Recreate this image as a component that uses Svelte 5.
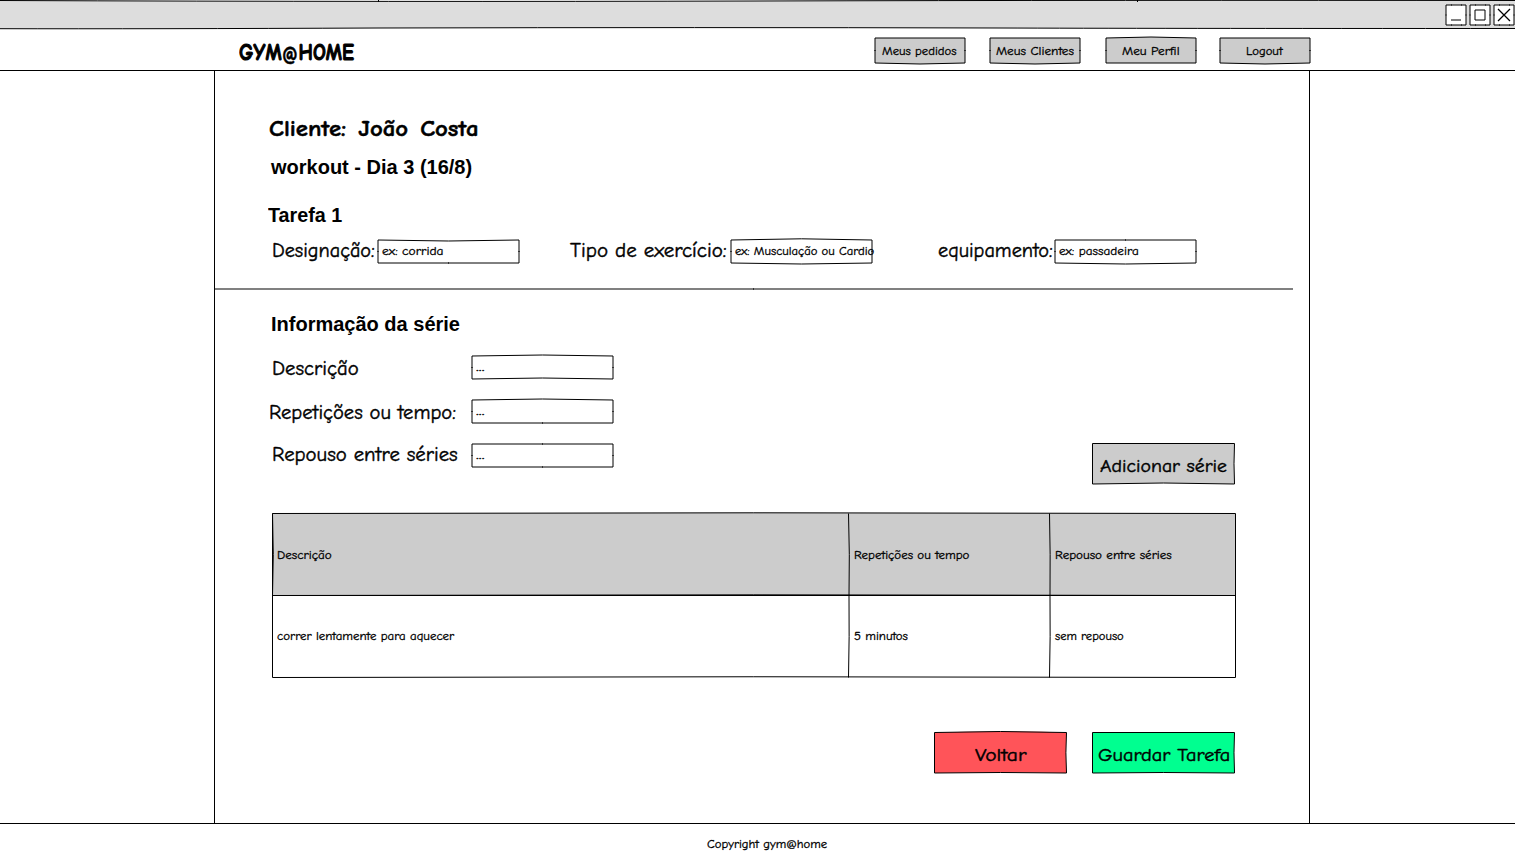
<script>
  const nav = [
    { text: 'Meus pedidos', w: 75, bow: [0, 0, 1, 0], gap: 0 },
    { text: 'Meus Clientes', w: 78, bow: [0, 0, 1, 0], gap: 25 },
    { text: 'Meu Perfil', w: 58, bow: [-1, 0, 0, 0], gap: 26 },
    { text: 'Logout', w: 37, bow: [0, 0, 1, 0], gap: 24 }
  ];

  const fields = [
    { label: 'Designação:', w: 103, hint: 'ex: corrida', hw: 62, bow: [1, 0, 0, 0], cls: 'f1' },
    { label: 'Tipo de exercício:', w: 157, hint: 'ex: Musculação ou Cardio', hw: 139, bow: [-1.2, 0, 1, 0], cls: 'f2' },
    { label: 'equipamento:', w: 115, hint: 'ex: passadeira', hw: 80, bow: [0, 0, 1, 0], cls: 'f3' }
  ];

  const series = [
    { label: 'Descrição', w: 87, bow: [-1, 0, -1, 0], x: 3 },
    { label: 'Repetições ou tempo:', w: 187, bow: [-1, 0, 0, 0], x: 0 },
    { label: 'Repouso entre séries', w: 186, bow: [0, 0, 0, 0], x: 3 }
  ];

  const cells = [
    { text: 'Descrição', w: 55 },
    { text: 'Repetições ou tempo', w: 115 },
    { text: 'Repouso entre séries', w: 117 },
    { text: 'correr lentamente para aquecer', w: 177 },
    { text: '5 minutos', w: 54 },
    { text: 'sem repouso', w: 69 }
  ];

  // Stretches a label horizontally so that it fills its given width.
  function fit(node, width) {
    node.style.transform = `scaleX(${width / node.offsetWidth})`;
  }

  // Rectangle whose edges bow slightly, in the order top, right, bottom, left.
  function outline(w, h, [t, r, b, l]) {
    return `M0 0Q${w / 2} ${t * 2} ${w} 0Q${w + r * 2} ${h / 2} ${w} ${h}Q${w / 2} ${h + b * 2} 0 ${h}Q${l * 2} ${h / 2} 0 0Z`;
  }
</script>

{#snippet txt(text, w)}
  <span class="txt" style="width:{w}px"><span use:fit={w}>{text}</span></span>
{/snippet}

{#snippet frame(w, h, bow, fill, ticks)}
  <svg class="frame" width={w} height={h} aria-hidden="true">
    <path transform={ticks ? null : 'translate(.5 .5)'} d={outline(w, h, bow)} {fill} stroke="#000" stroke-linejoin="round" />
    {#if ticks}
      <path d="M-1 {h / 2}h2M{w - 1} {h / 2}h2" stroke="#000" stroke-opacity=".6" />
      {#if bow[0] === 0 && h < 25}<path d="M{w / 2} -1v2" stroke="#000" stroke-opacity=".6" />{/if}
      {#if bow[2] === 0 && h < 25}<path d="M{w / 2} {h - 1}v2" stroke="#000" stroke-opacity=".6" />{/if}
    {/if}
  </svg>
{/snippet}

<div class="window">
  <div class="titlebar">
    <svg class="edges" width="1515" height="30" aria-hidden="true">
      <path d="M-2 .5Q400 2 757 1T1517 .5V28.5Q1136 28.5 1000 28Q700 27.2 378 28Q150 29 -2 28.7Z" fill="#ddd" stroke="#000" />
      <path d="M378.5 0v2M1137.5 0v2" stroke="#000" />
    </svg>
    <div class="controls">
      <svg viewBox="0 0 20 20"><path d="M0 0H20V20H0Z" fill="#fff" /><path d="M5 15H15" /><path class="nick" d="M5.5-1v2M15.5-1v2M5.5 19v2M15.5 19v2M-1 10h2M19 10h2" /></svg>
      <svg viewBox="0 0 20 20"><path d="M0 0H20V20H0Z" fill="#fff" /><path d="M5 5H15V15H5Z" /><path class="nick" d="M5.5-1v2M15.5-1v2M5.5 19v2M15.5 19v2M-1 10h2M19 10h2" /></svg>
      <svg viewBox="0 0 20 20"><path d="M0 0H20V20H0Z" fill="#fff" /><path d="M4 4L16 16M16 4L4 16" stroke-width="1.3" /><path class="nick" d="M5.5-1v2M15.5-1v2M5.5 19v2M15.5 19v2M-1 10h2M19 10h2" /></svg>
    </div>
  </div>

  <header>
    <div class="logo"><span use:fit={115}>GYM<small>@</small>HOME</span></div>
    <nav>
      {#each nav as n}
        <div class="navbtn" style="margin-left:{n.gap}px">
          {@render frame(90, 25, n.bow, '#ccc', true)}
          {@render txt(n.text, n.w)}
        </div>
      {/each}
    </nav>
  </header>

  <main>
    <h1>{@render txt('Cliente: João Costa', 210)}</h1>
    <h2 class="workout">{@render txt('workout - Dia 3 (16/8)', 201)}</h2>
    <h2 class="task">{@render txt('Tarefa 1', 74)}</h2>

    <div class="fields">
      {#each fields as f}
        <div class="field {f.cls}">
          <span class="label">{@render txt(f.label, f.w)}</span>
          <div class="input">
            {@render frame(141, 23, f.bow, '#fff', true)}
            {@render txt(f.hint, f.hw)}
          </div>
        </div>
      {/each}
    </div>

    <div class="divider"><i></i></div>

    <h2 class="info">{@render txt('Informação da série', 189)}</h2>

    <div class="block">
      <div class="series">
        {#each series as s}
          <div class="row">
            <span class="label" style="padding-left:{s.x}px">{@render txt(s.label, s.w)}</span>
            <div class="input">
              {@render frame(141, 23, s.bow, '#fff', true)}
              {@render txt('...', 9)}
            </div>
          </div>
        {/each}
      </div>
      <div class="btn">
        {@render frame(142, 40.5, [0, -0.5, -1, 0], '#ccc', false)}
        {@render txt('Adicionar série', 127)}
      </div>
    </div>

    <div class="table">
      <svg class="frame" width="963" height="164" aria-hidden="true">
        <g transform="translate(.5 .5)">
          <path d="M0 0Q480-1.4 963 0V82Q480 80.6 0 82Q1.6 41 0 0Z" fill="#ccc" />
          <g fill="none" stroke="#000">
            <path d="M0 0Q480-1.4 963 0V164Q480 162.5 0 164Z" />
            <path d="M0 0Q1.6 41 0 82H963Q480 80.6 0 82" />
            <path d="M576 0Q577.4 41 576.5 82Q577 123 576 164M777 0Q778 41 777.5 82Q778 123 777 164" />
          </g>
        </g>
      </svg>
      {#each cells as c}
        <div class="cell">{@render txt(c.text, c.w)}</div>
      {/each}
    </div>

    <div class="actions">
      <div class="btn back">
        {@render frame(132, 40.5, [-1, -0.6, -0.5, 0], '#ff5459', false)}
        {@render txt('Voltar', 52)}
      </div>
      <div class="btn">
        {@render frame(142, 40.5, [0, -0.5, -0.5, 0], '#00ff90', false)}
        {@render txt('Guardar Tarefa', 132)}
      </div>
    </div>
  </main>

  <footer>{@render txt('Copyright gym@home', 120)}</footer>
</div>

<style>
  :global(body) { background: #fff; overflow: hidden; }
  .window {
    width: 1515px;
    height: 863px;
    display: flex;
    flex-direction: column;
    color: #000;
    font: 400 12.4px/20px "Comic Sans MS", "Comic Neue", "Open Sans", sans-serif;
    -webkit-text-stroke: .3px #000;
  }
  .txt { display: inline-block; white-space: nowrap; flex: none; }
  .txt span { display: inline-block; transform-origin: 0 50%; }
  .frame { position: absolute; left: 0; top: 0; overflow: visible; z-index: 0; }
  .frame ~ * { position: relative; z-index: 1; }

  .titlebar { position: relative; height: 29px; flex: none; }
  .edges { position: absolute; left: 0; top: 0; }
  .controls { position: relative; display: flex; justify-content: flex-end; gap: 4px; padding: 5px 1px 0 0; }
  .controls svg { width: 20px; height: 20px; overflow: visible; fill: none; stroke: #000; stroke-linejoin: round; }
  .nick { stroke-opacity: .5; }

  header {
    height: 41px;
    flex: none;
    border-bottom: 1px solid #000;
    display: flex;
    justify-content: space-between;
    padding: 0 205px 0 239px;
  }
  .logo {
    width: 115px;
    font-size: 25px;
    font-weight: 700;
    line-height: 45px;
    letter-spacing: .3px;
    white-space: nowrap;
    -webkit-text-stroke: 1.2px #000;
  }
  .logo span { display: inline-block; transform-origin: 0 50%; }
  .logo small { font-size: 24px; line-height: 1; position: relative; top: 2px; -webkit-text-stroke-width: .4px; }
  nav { display: flex; padding-top: 9px; }
  .navbtn { position: relative; width: 90px; height: 25px; line-height: 27px; text-align: center; }
  .navbtn .txt, .btn .txt { text-align: left; }
  .navbtn .txt { left: -.5px; }

  main {
    width: 1094px;
    height: 752px;
    flex: none;
    margin-left: 214px;
    border: solid #000;
    border-width: 0 1px;
  }
  h1, h2 { margin: 0; display: flex; }
  h1 { font-size: 23px; line-height: 30px; font-weight: 700; word-spacing: 3px; padding: 43px 0 0 54px; -webkit-text-stroke: .5px #000; }
  h2 { font: 700 20px/24px "Liberation Sans", Arial, sans-serif; -webkit-text-stroke: 0; }
  .workout { padding: 11px 0 0 56px; }
  .task { padding: 24px 0 0 53px; }
  .label { font-size: 21px; line-height: 24px; -webkit-text-stroke-width: .45px; }

  .fields { display: flex; height: 24px; padding: 11px 0 0 57px; }
  .field { display: flex; }
  .f1 .input { margin-left: 3px; }
  .f2 { margin-left: 51px; }
  .f2 .input { margin-left: 4px; }
  .f3 { margin-left: 66px; }
  .f3 .input { margin-left: 2px; }
  .input { position: relative; width: 141px; height: 23px; margin-top: 2px; padding-left: 4px; box-sizing: border-box; line-height: 23px; }

  .divider { width: 1078px; height: 2px; margin-top: 26px; background: #808080; display: flex; justify-content: center; }
  .divider i { width: 1px; height: 2px; margin-right: 2px; background: #333; }
  .info { padding: 22px 0 0 56px; }

  .block { display: flex; justify-content: space-between; padding: 20px 75px 0 54px; }
  .series { display: flex; flex-direction: column; gap: 21px; }
  .row { display: flex; height: 23px; }
  .row .label { width: 203px; box-sizing: border-box; line-height: 24px; }
  .row:nth-child(3) .label { margin-top: -2px; }
  .row .input { margin-top: 0; }
  .btn { position: relative; width: 142px; height: 41px; font-size: 19px; line-height: 46px; text-align: center; -webkit-text-stroke-width: .45px; }
  .btn .txt { left: .7px; }
  .block .btn { margin: 87px 0 0; }

  .table {
    position: relative;
    width: 963px;
    margin: 29px 0 0 57px;
    display: grid;
    grid-template-columns: 577px 201px 185px;
    grid-template-rows: 82px 82px;
    line-height: 84px;
  }
  .cell { padding-left: 5px; }
  .cell:nth-child(n + 5) { line-height: 82px; }
  .actions { display: flex; justify-content: flex-end; gap: 26px; padding: 55px 75px 0 0; }
  .back { width: 132px; }

  footer { border-top: 1px solid #000; height: 39px; line-height: 41px; padding-left: 707px; }
</style>
